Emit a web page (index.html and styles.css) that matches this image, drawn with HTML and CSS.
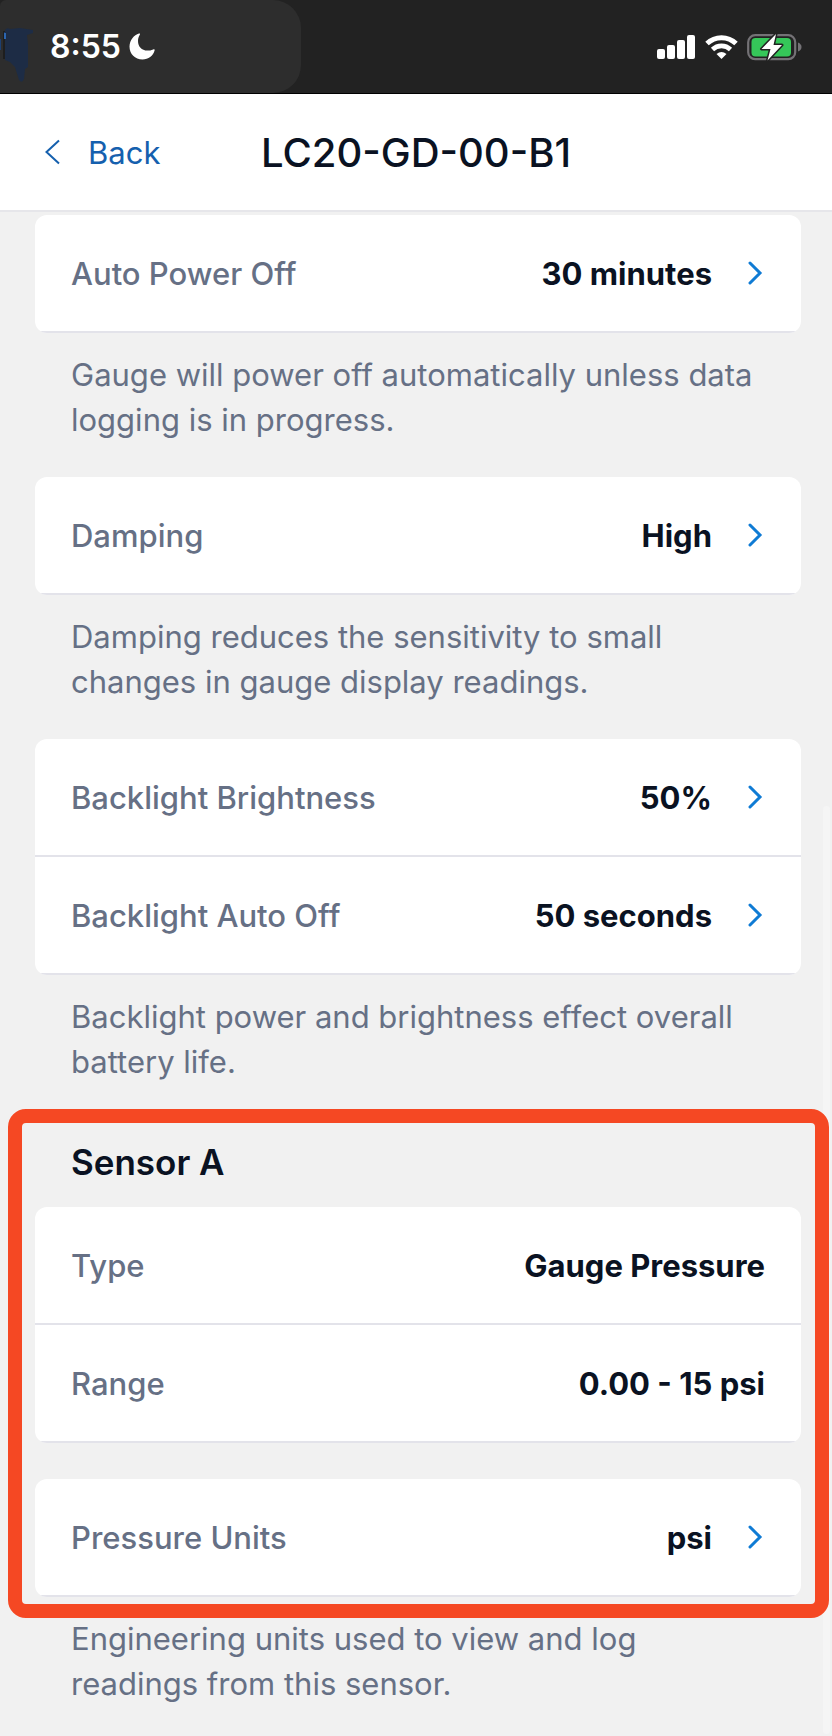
FILE: index.html
```html
<!DOCTYPE html>
<html lang="en">
<head>
  <meta charset="UTF-8">
  <meta name="viewport" content="width=device-width, initial-scale=1.0">
  <title>LC20-GD-00-B1</title>
  <link rel="stylesheet" href="styles.css">
</head>
<body>
  <div class="status-bar">
    <svg class="scribble" width="34" height="56" viewBox="0 0 34 56" aria-hidden="true">
      <path d="M0 12v11" stroke="#1d3f70" stroke-width="2"/>
      <path d="M5 5V12" stroke="#2b65b0" stroke-width="2"/>
      <path d="M4 4V32" stroke="#111" stroke-width="1"/>
      <path d="M5 3Q7 0 10 2L20 1L33 3V6L27 8L28 18L28 40L25 42L24 52Q22 57 19 53L15 40L10 35L5 33Z" fill="#1d2c45"/>
      <path d="M5 6V12" stroke="#2b65b0" stroke-width="2"/>
    </svg>
    <div class="status-left">
      <span class="time">8:55</span>
      <svg width="26" height="27" viewBox="0 0 26 27" aria-hidden="true">
        <path d="M10 0.500C5 2 0.500 7 0.500 13.500C0.500 21 6 26.500 13.500 26.500C19.500 26.500 24 23 25.600 17.500C25.800 16.500 25.200 16 24.200 16.500C22 17.400 20.500 17.600 18.500 17.600C12.500 17.600 9 13.500 9 8C9 5.500 9.600 4 10.800 1.800C11.300 0.800 11 0.200 10 0.500Z" fill="#fff"/>
      </svg>
    </div>
    <div class="status-right">
      <svg width="39" height="24" viewBox="0 0 39 24" fill="#fff" aria-hidden="true">
        <rect x="0" y="14" width="8" height="10" rx="2"/>
        <rect x="10" y="10" width="8" height="14" rx="2"/>
        <rect x="20" y="5" width="8" height="19" rx="2"/>
        <rect x="30" y="0" width="8" height="24" rx="2"/>
      </svg>
      <svg width="33" height="24" viewBox="0 0 33 24" aria-hidden="true">
        <path d="M2 8.500A21 21 0 0 1 31 8.500" fill="none" stroke="#fff" stroke-width="5"/>
        <path d="M7.500 14.500A13 13 0 0 1 25.500 14.500" fill="none" stroke="#fff" stroke-width="4.600"/>
        <path d="M16.500 24L11.500 19Q16.500 15 21.500 19Z" fill="#fff"/>
      </svg>
      <svg width="55" height="28" viewBox="0 0 55 28" aria-hidden="true">
        <rect x="1.200" y="2.200" width="47" height="24" rx="7" fill="none" stroke="#747276" stroke-width="2.200"/>
        <path d="M51 9.500Q54.500 11 54.500 14T51 18.500Z" fill="#747276"/>
        <rect x="4.500" y="5" width="39.500" height="18.500" rx="4" fill="#35c759"/>
        <path d="M29 1L14.500 16H23.500L20.500 27.500L35 12H26.500Z" fill="#fff" stroke="#222" stroke-width="3" paint-order="stroke" stroke-linejoin="round"/>
      </svg>
    </div>
  </div>

  <header class="nav">
    <a class="back" href="#">
      <svg width="15" height="26" viewBox="0 0 15 26" aria-hidden="true">
        <path d="M14 1.500L1.500 13L14 24.500" fill="none" stroke="#1560ae" stroke-width="2"/>
      </svg>
      Back
    </a>
    <h1>LC20-GD-00-B1</h1>
  </header>

  <main class="settings">
    <div class="card">
      <button class="row"><span class="label">Auto Power Off</span><span class="value">30 minutes</span><svg class="chevron" viewBox="0 0 15 24"><path d="M2 2L12 12L2 22"/></svg></button>
    </div>
    <p class="hint">Gauge will power off automatically unless data logging is in progress.</p>

    <div class="card">
      <button class="row"><span class="label">Damping</span><span class="value">High</span><svg class="chevron" viewBox="0 0 15 24"><path d="M2 2L12 12L2 22"/></svg></button>
    </div>
    <p class="hint">Damping reduces the sensitivity to small changes in gauge display readings.</p>

    <div class="card">
      <button class="row"><span class="label">Backlight Brightness</span><span class="value">50%</span><svg class="chevron" viewBox="0 0 15 24"><path d="M2 2L12 12L2 22"/></svg></button>
      <button class="row"><span class="label">Backlight Auto Off</span><span class="value">50 seconds</span><svg class="chevron" viewBox="0 0 15 24"><path d="M2 2L12 12L2 22"/></svg></button>
    </div>
    <p class="hint">Backlight power and brightness effect overall battery life.</p>

    <section class="sensor">
      <h2>Sensor A</h2>
      <div class="card">
        <div class="row"><span class="label">Type</span><span class="value">Gauge Pressure</span></div>
        <div class="row"><span class="label">Range</span><span class="value">0.00 - 15 psi</span></div>
      </div>
      <div class="card">
        <button class="row"><span class="label">Pressure Units</span><span class="value">psi</span><svg class="chevron" viewBox="0 0 15 24"><path d="M2 2L12 12L2 22"/></svg></button>
      </div>
      <div class="highlight"></div>
    </section>
    <p class="hint">Engineering units used to view and log readings from this sensor.</p>
    <div class="scroll-thumb"></div>
  </main>
</body>
</html>
```
FILE: styles.css
```css
* {
  box-sizing: border-box;
}

body {
  margin: 0;
  background: #f1f1f1;
  color: #0a1222;
  font-family: Inter, "Liberation Sans", sans-serif;
  font-optical-sizing: none;
  font-size: 31px;
  line-height: 45px;
}

.status-bar {
  position: relative;
  display: flex;
  justify-content: space-between;
  height: 94px;
  background: #222;
  border-bottom: 1px solid #000;
}

.scribble {
  position: absolute;
  left: 0;
  top: 27px;
}

.status-left {
  display: flex;
  align-items: center;
  gap: 8px;
  width: 301px;
  padding-left: 50px;
  background: #2d2d2d;
  border-radius: 6px 28px 28px 0;
}

.time {
  color: #fff;
  font-size: 32px;
  font-weight: 600;
}

.status-right {
  display: flex;
  align-items: center;
  gap: 9px;
  padding-right: 30px;
}

.nav {
  display: grid;
  grid-template-columns: 1fr auto 1fr;
  align-items: center;
  height: 118px;
  padding: 0 45px;
  background: #fff;
  border-bottom: 2px solid #e6e6ea;
}

.back {
  display: flex;
  align-items: center;
  gap: 28px;
  color: #1560ae;
  text-decoration: none;
}

h1 {
  margin: 0;
  font-size: 40px;
  font-weight: 500;
}

.settings {
  position: relative;
  padding: 3px 31px 0 35px;
}

.card {
  overflow: hidden;
  background: #fff;
  border-radius: 12px;
}

.card + .card {
  margin-top: 36px;
}

.row {
  display: flex;
  align-items: center;
  width: 100%;
  height: 118px;
  padding: 0 36px;
  border: 0;
  border-bottom: 2px solid #e3e3ea;
  background: none;
  color: inherit;
  font: inherit;
  font-optical-sizing: none;
  text-align: left;
}

.label {
  flex: 1;
  color: #667085;
  font-weight: 500;
}

.value {
  font-weight: 700;
}

.chevron {
  width: 15px;
  height: 24px;
  margin-left: 36px;
  fill: none;
  stroke: #0f7bd4;
  stroke-width: 3;
  stroke-linecap: round;
}

button.row {
  padding-right: 38px;
}

.hint {
  margin: 0;
  padding: 19px 38px 35px 36px;
  color: #667085;
}

.settings > .hint:last-of-type {
  padding-bottom: 30px;
}

.sensor {
  position: relative;
}

h2 {
  margin: 0;
  padding: 21px 36px 22px;
  font-size: 35px;
  font-weight: 600;
}

/* frame drawn around the sensor group */
.highlight {
  position: absolute;
  inset: -10px -28px -21px -27px;
  z-index: 1;
  border: 14px solid #f54823;
  border-radius: 18px;
  pointer-events: none;
}

.scroll-thumb {
  position: absolute;
  top: 594px;
  right: 2px;
  bottom: 2px;
  width: 7px;
  border-radius: 4px;
  background: #f5f5f5;
}
```
